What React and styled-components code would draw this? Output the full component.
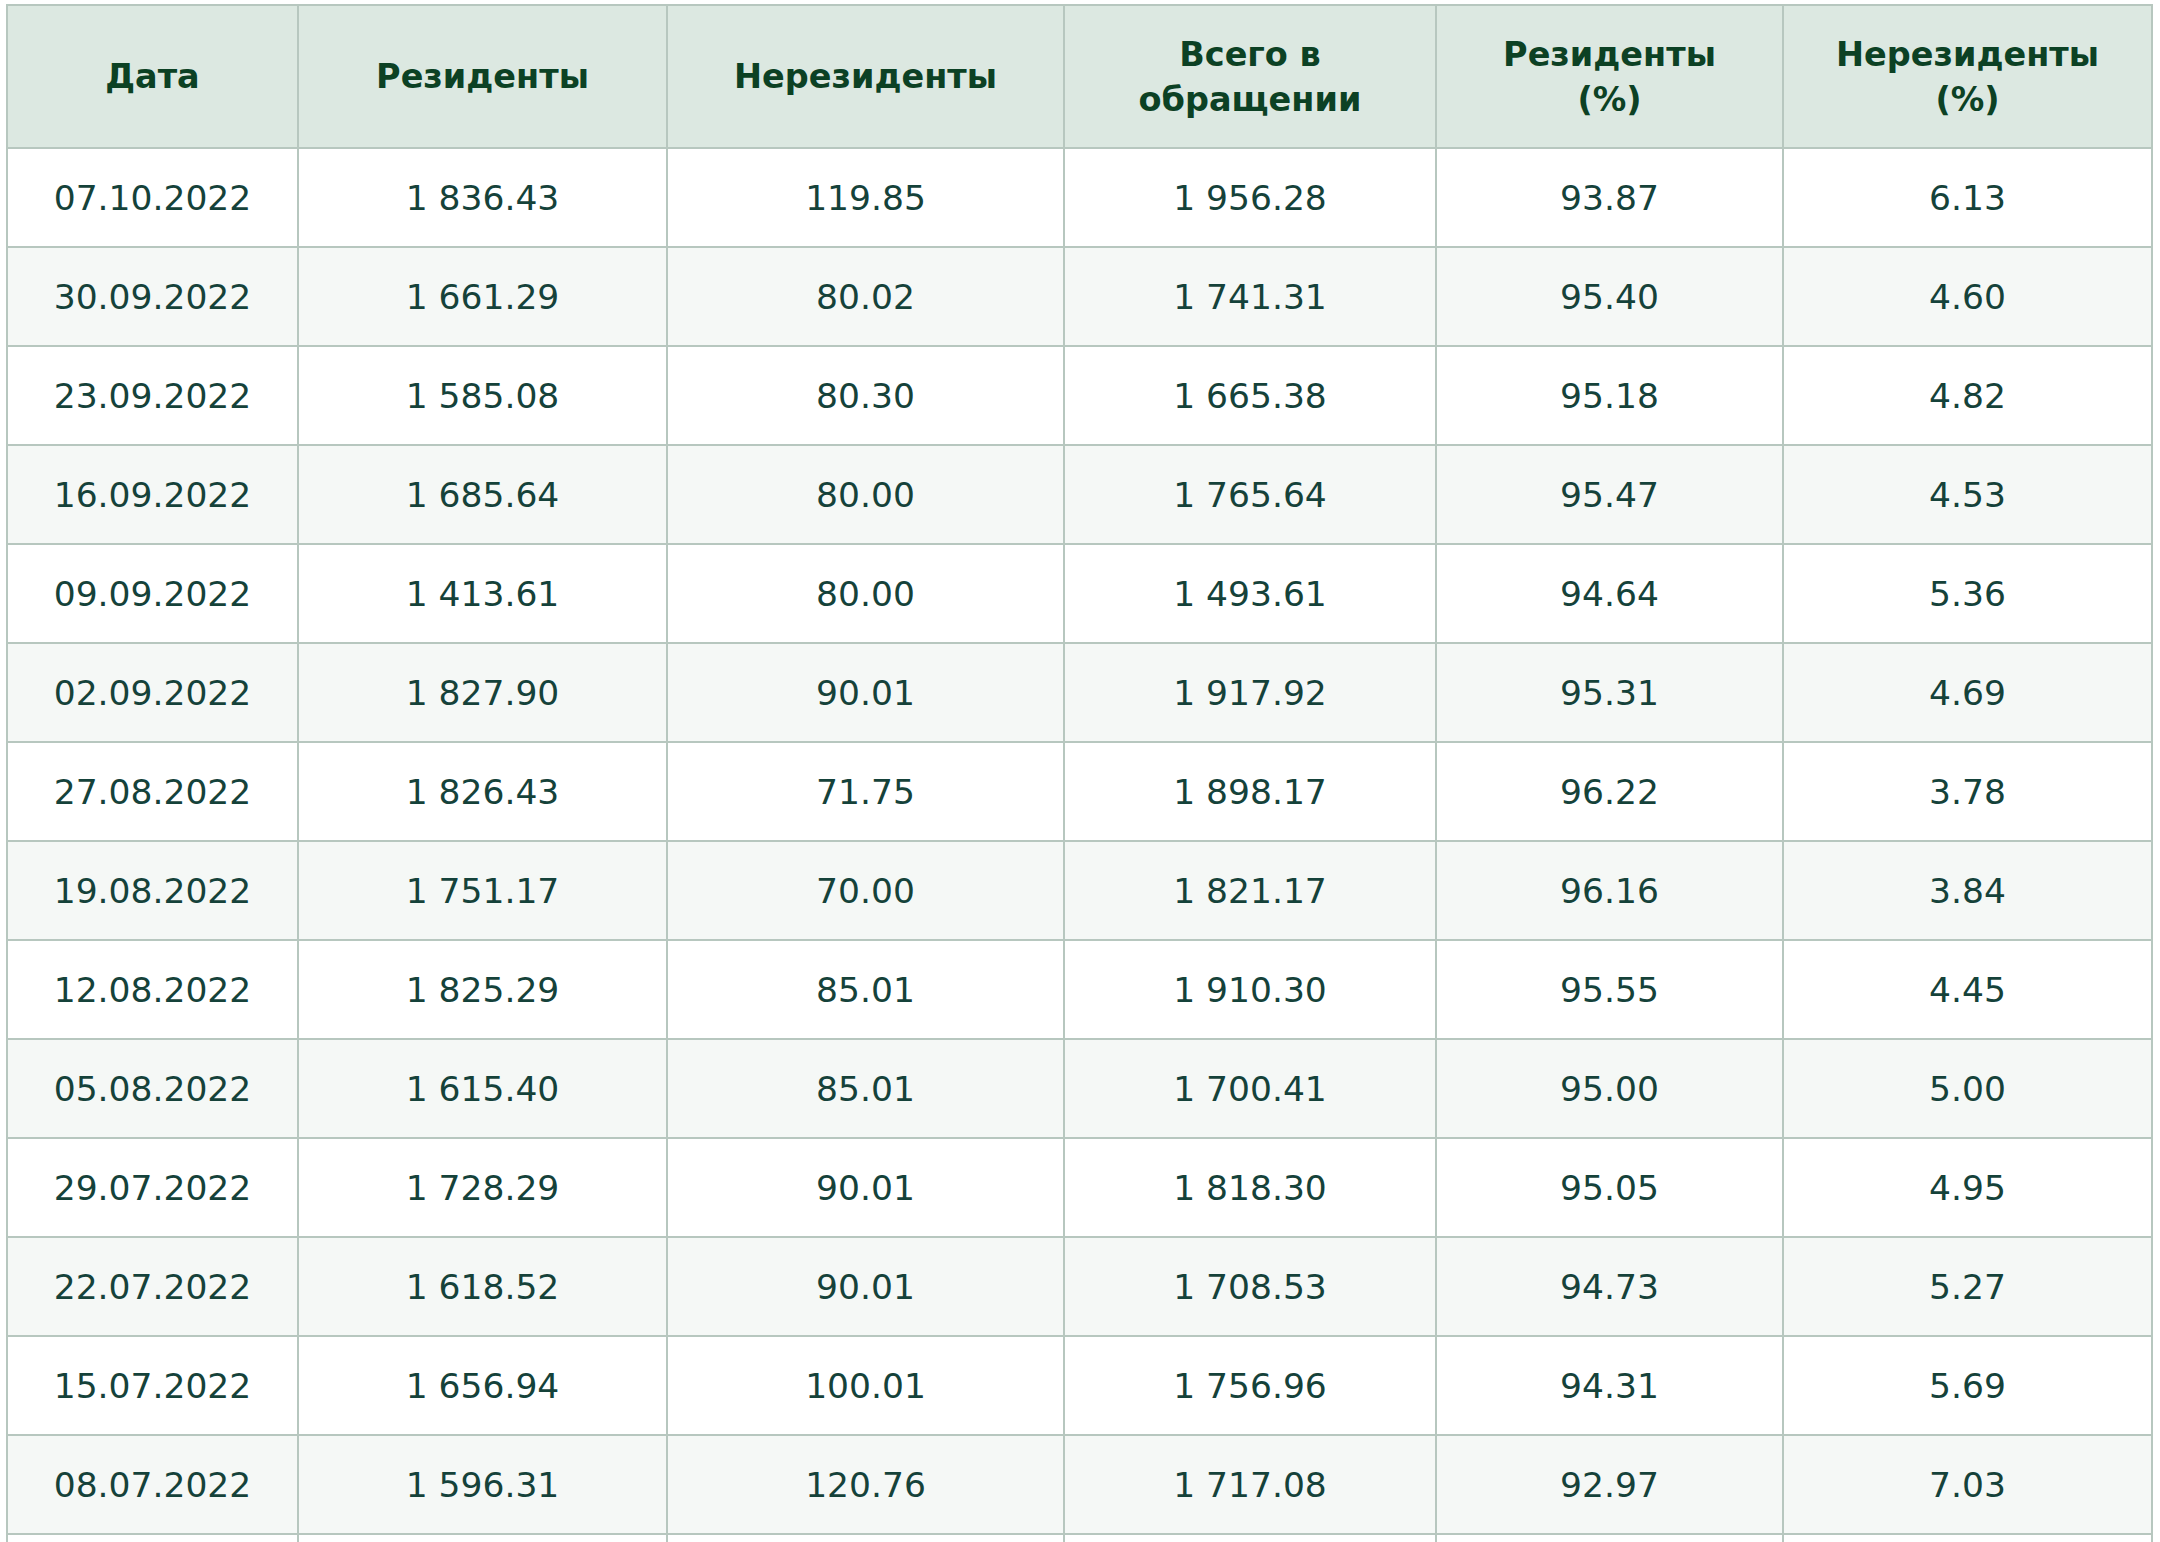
import React from 'react'
import styled, { createGlobalStyle } from 'styled-components'

const GlobalStyle = createGlobalStyle`
  body {
    margin: 0;
    padding: 4px 0 0 6px;
    background: #ffffff;
    font-family: "DejaVu Sans", Verdana, sans-serif;
  }
`

const Table = styled.table`
  width: 2145px;
  border-collapse: collapse;
  table-layout: fixed;
  border: 2px solid #b7c7bf;
`

const Col = styled.col`
  width: ${p => p.$w}px;
`

const HeadCell = styled.th`
  height: 141px;
  padding: 0 12px;
  background: #dce8e1;
  border: 2px solid #b7c7bf;
  color: #0c4124;
  font-size: 33.5px;
  font-weight: bold;
  line-height: 45px;
  text-align: center;
  vertical-align: middle;
`

const Row = styled.tr`
  background: ${p => (p.$odd ? '#f5f8f6' : '#ffffff')};
`

const Cell = styled.td`
  height: 97px;
  padding: 0;
  border: 2px solid #b7c7bf;
  color: #15423a;
  font-size: 34.5px;
  text-align: center;
  vertical-align: middle;
`

const widths = [291, 369, 397, 372, 347, 369]

const heads = [
  ['Дата'],
  ['Резиденты'],
  ['Нерезиденты'],
  ['Всего в', 'обращении'],
  ['Резиденты', '(%)'],
  ['Нерезиденты', '(%)'],
]

const rows = [
  ['07.10.2022', '1 836.43', '119.85', '1 956.28', '93.87', '6.13'],
  ['30.09.2022', '1 661.29', '80.02', '1 741.31', '95.40', '4.60'],
  ['23.09.2022', '1 585.08', '80.30', '1 665.38', '95.18', '4.82'],
  ['16.09.2022', '1 685.64', '80.00', '1 765.64', '95.47', '4.53'],
  ['09.09.2022', '1 413.61', '80.00', '1 493.61', '94.64', '5.36'],
  ['02.09.2022', '1 827.90', '90.01', '1 917.92', '95.31', '4.69'],
  ['27.08.2022', '1 826.43', '71.75', '1 898.17', '96.22', '3.78'],
  ['19.08.2022', '1 751.17', '70.00', '1 821.17', '96.16', '3.84'],
  ['12.08.2022', '1 825.29', '85.01', '1 910.30', '95.55', '4.45'],
  ['05.08.2022', '1 615.40', '85.01', '1 700.41', '95.00', '5.00'],
  ['29.07.2022', '1 728.29', '90.01', '1 818.30', '95.05', '4.95'],
  ['22.07.2022', '1 618.52', '90.01', '1 708.53', '94.73', '5.27'],
  ['15.07.2022', '1 656.94', '100.01', '1 756.96', '94.31', '5.69'],
  ['08.07.2022', '1 596.31', '120.76', '1 717.08', '92.97', '7.03'],
  ['', '', '', '', '', ''],
]

const App = () => {
  return (
    <>
      <GlobalStyle />
      <Table>
        <colgroup>
          {widths.map((w, i) => <Col key={i} $w={w} />)}
        </colgroup>
        <thead>
          <tr>
            {heads.map((h, i) => (
              <HeadCell key={i}>
                {h.map((line, j) => (
                  <React.Fragment key={j}>
                    {j > 0 && <br />}
                    {line}
                  </React.Fragment>
                ))}
              </HeadCell>
            ))}
          </tr>
        </thead>
        <tbody>
          {rows.map((r, i) => (
            <Row key={i} $odd={i % 2 === 1}>
              {r.map((v, j) => <Cell key={j}>{v}</Cell>)}
            </Row>
          ))}
        </tbody>
      </Table>
    </>
  )
}

export default App
